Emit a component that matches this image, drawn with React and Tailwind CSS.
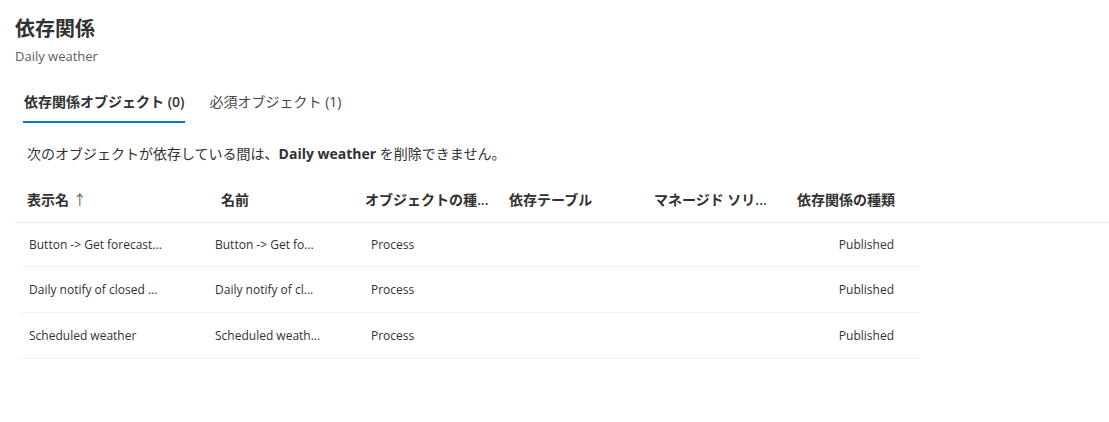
import React from 'react';

const FONT = { fontFamily: '"Segoe UI", "Open Sans", "Noto Sans CJK JP", sans-serif' };

const rows = [
  { display: 'Button -> Get forecast...', name: 'Button -> Get fo...', type: 'Process', dep: 'Published' },
  { display: 'Daily notify of closed ...', name: 'Daily notify of cl...', type: 'Process', dep: 'Published' },
  { display: 'Scheduled weather', name: 'Scheduled weath...', type: 'Process', dep: 'Published' },
];

const COLS = 'grid grid-cols-[194px_144px_144px_145px_143px_133px]';

export default function App() {
  return (
    <div className="w-[1109px] h-[422px] bg-white text-[#323130] overflow-hidden" style={FONT}>
      <div className="pl-[15px] pt-[14px]">
        <h1 className="text-[20px] font-bold leading-[30px]">依存関係</h1>
        <div className="text-[13px] text-[#605e5c] leading-[20px] mt-[2px]">Daily weather</div>
      </div>

      {/* tabs */}
      <div className="flex items-end pl-[23px] mt-[26px] gap-[24px]">
        <div className="flex flex-col">
          <span className="text-[14px] font-semibold leading-[20px] px-[1px]">依存関係オブジェクト (0)</span>
          <div className="h-[2px] bg-[#0078d4] mt-[9px] w-[162px]" />
        </div>
        <div className="flex flex-col">
          <span className="text-[14px] text-[#484644] leading-[20px]">必須オブジェクト (1)</span>
          <div className="h-[2px] mt-[9px]" />
        </div>
      </div>

      <p className="text-[14px] pl-[27px] mt-[21px] leading-[20px]">
        次のオブジェクトが依存している間は、<span className="font-bold">Daily weather</span> を削除できません。
      </p>

      {/* table */}
      <div className="mt-[12px] pl-[15px]">
        <div className={`${COLS} pl-[2px] h-[47px] items-center border-b border-[#edebe9] w-[1094px] text-[14px] font-semibold`}>
          <div className="pl-[10px]">表示名 <span className="font-normal text-[#605e5c]">↑</span></div>
          <div className="pl-[10px]">名前</div>
          <div className="pl-[10px]">オブジェクトの種...</div>
          <div className="pl-[10px]">依存テーブル</div>
          <div className="pl-[10px]">マネージド ソリ...</div>
          <div className="pl-[10px]">依存関係の種類</div>
        </div>
        <div className="pl-[6px]">
          {rows.map((r, i) => (
            <div
              key={i}
              className={`grid grid-cols-[190px_144px_144px_145px_143px_133px] ${i === 0 ? 'h-[44px]' : 'h-[46px]'} items-center border-b border-[#f3f2f1] w-[899px] text-[12px]`}
            >
              <div className="pl-[8px] whitespace-nowrap">{r.display}</div>
              <div className="pl-[4px] whitespace-nowrap">{r.name}</div>
              <div className="pl-[16px]">{r.type}</div>
              <div />
              <div />
              <div className="text-right pr-[26px]">{r.dep}</div>
            </div>
          ))}
        </div>
      </div>
    </div>
  );
}
